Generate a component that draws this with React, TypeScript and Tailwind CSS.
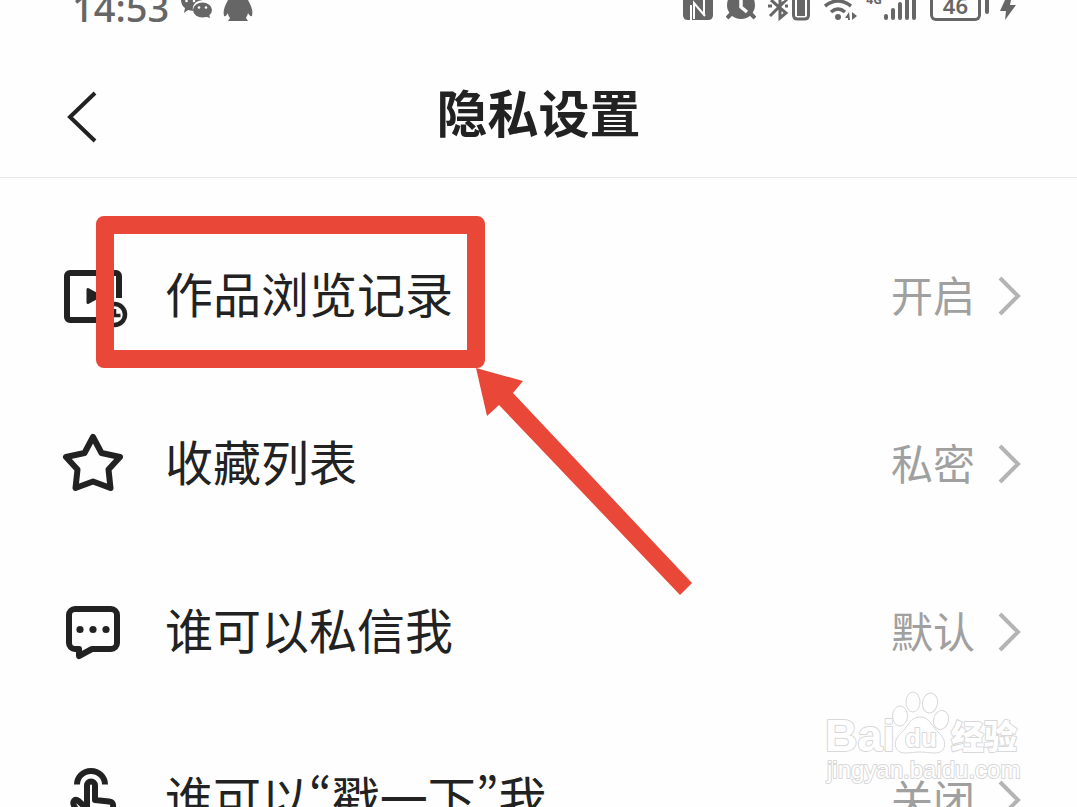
import type { ReactNode } from 'react'

type Setting = {
  label: string
  value: string
  icon: ReactNode
  highlighted?: boolean
}

const iconClass = 'h-16 w-16 shrink-0 overflow-visible'

function HistoryIcon() {
  return (
    <svg viewBox="0 0 64 64" className={iconClass} fill="none" stroke="currentColor" strokeWidth="6" aria-hidden="true">
      <path d="M55 34V12a3 3 0 0 0-3-3H6a3 3 0 0 0-3 3v41a3 3 0 0 0 3 3h34" />
      <path d="M24 25.500v13l12-6.500z" fill="currentColor" strokeWidth="3" strokeLinejoin="round" />
      <circle cx="50.500" cy="50.500" r="10.500" strokeWidth="4.500" />
      <path d="M50.500 45v6.500h6" strokeWidth="3.500" />
    </svg>
  )
}

function StarIcon() {
  return (
    <svg viewBox="0 0 64 64" className={iconClass} fill="none" stroke="currentColor" strokeWidth="6" strokeLinejoin="round" aria-hidden="true">
      <path d="M29 5l8.500 16 18.500 4-11.500 12.500 2 18.500L29 49.500 11.500 56l2-18.500L2 25l18.500-4z" />
    </svg>
  )
}

function MessageIcon() {
  return (
    <svg viewBox="0 0 64 64" className={iconClass} fill="none" stroke="currentColor" strokeWidth="6" strokeLinejoin="round" aria-hidden="true">
      <path d="M11 9h36a6 6 0 0 1 6 6v28a6 6 0 0 1-6 6H28l-13 7v-7h-4a6 6 0 0 1-6-6V15a6 6 0 0 1 6-6z" />
      <g fill="currentColor" stroke="none">
        <circle cx="16" cy="29.500" r="3.600" />
        <circle cx="29" cy="29.500" r="3.600" />
        <circle cx="42" cy="29.500" r="3.600" />
      </g>
    </svg>
  )
}

function PokeIcon() {
  return (
    <svg viewBox="0 0 64 64" className={iconClass} fill="none" stroke="currentColor" strokeWidth="6" strokeLinejoin="round" aria-hidden="true">
      <path d="M13 16.500a14 13.500 0 0 1 28 0" />
      <path d="M23 41l-9-8.500c-3-2.500-6 1-4 5L20 58h26l3-19c.5-4-.5-5-4-5.500L31 32V17.500a4 4 0 0 0-8 0V41" />
    </svg>
  )
}

const settings: Setting[] = [
  { label: '作品浏览记录', value: '开启', icon: <HistoryIcon />, highlighted: true },
  { label: '收藏列表', value: '私密', icon: <StarIcon /> },
  { label: '谁可以私信我', value: '默认', icon: <MessageIcon /> },
  { label: '谁可以“戳一下”我', value: '关闭', icon: <PokeIcon /> },
]

function StatusBar() {
  return (
    <div className="flex h-12 items-start justify-between overflow-hidden pr-[60px] pl-[72px] font-['Noto_Sans',sans-serif] text-[#666]">
      <div className="flex items-start gap-3">
        <span className="text-[38px] leading-[14px] font-medium">14:53</span>
        <svg viewBox="0 0 72 24" className="h-6 w-[72px]" fill="currentColor" aria-hidden="true">
          <path d="M0 0h22c-8 1-11 5-10 11l-5-1-4 3 1-5Q0 5 0 0z" />
          <ellipse cx="21.500" cy="10" rx="9.500" ry="7.500" />
          <path d="M23 16l5-2 1 4z" />
          <g fill="#fff">
            <circle cx="5.500" cy="1" r="1.300" />
            <circle cx="13" cy="1" r="1.300" />
            <circle cx="18" cy="7.500" r="1.300" />
            <circle cx="25" cy="7.500" r="1.300" />
          </g>
          <path d="M47 0h20l2 4c2 4 3 8 2 12-1 1-3-1-4-3-.5 3-2 4-2 5l2 3H47l2-3c-1-1-2-3-2-5-1 2-3 4-4 3-1-4 0-8 2-12z" />
        </svg>
      </div>
      <div className="flex items-start gap-3">
        <svg viewBox="0 0 32 24" className="h-6 w-8" aria-hidden="true">
          <path d="M1 0h30v15q0 5-5 5H6q-5 0-5-5z" fill="currentColor" />
          <path d="M9 20V5M22 0v14" fill="none" stroke="#fff" strokeWidth="2" />
          <path d="M12 19V3l11 13" fill="none" stroke="#fff" strokeWidth="2" />
        </svg>
        <svg viewBox="0 0 30 24" className="h-6 w-[30px]" aria-hidden="true">
          <circle cx="15" cy="5" r="14" fill="currentColor" />
          <path d="M5 14l-4 4M25 14l4 4" stroke="currentColor" strokeWidth="4" />
          <path d="M15 0v7l6 5" fill="none" stroke="#fff" strokeWidth="3.500" />
        </svg>
        <svg viewBox="0 0 44 24" className="h-6 w-11" fill="none" stroke="currentColor" strokeWidth="3" aria-hidden="true">
          <path d="M3 0l15 13-6 5V-5l6 5L2 16" />
          <path d="M0 6h4M17 6h3" />
          <path d="M25.500 0v15q0 4 4 4h7q4 0 4-4V0" />
          <path d="M29 0h8v16h-8z" fill="currentColor" stroke="none" />
        </svg>
        <div className="flex items-start gap-2">
          <svg viewBox="0 0 34 24" className="h-6 w-[34px]" fill="none" stroke="currentColor" strokeWidth="3.500" aria-hidden="true">
            <path d="M1 6q13-10 26 0M7 12q7-6 14 0" />
            <circle cx="14" cy="17" r="3" fill="currentColor" stroke="none" />
            <path d="M25 12l-4 6h3v2h2zM28 12v8l5-4z" fill="currentColor" stroke="none" />
          </svg>
          <div className="flex items-start">
            <span className="text-xs leading-[0px] font-bold">4G</span>
            <svg viewBox="0 0 36 24" className="h-6 w-9" stroke="currentColor" strokeWidth="4" strokeLinecap="round" aria-hidden="true">
              <path d="M4 16v2M11 10v8M18 4v14M25-2v20M32-2v20" />
            </svg>
          </div>
        </div>
        <div className="flex items-start gap-1">
          <span className="h-[21px] rounded-b-md border-3 border-t-0 border-current px-2.5 text-[22px] leading-[10px] font-semibold">46</span>
          <span className="h-3.5 w-1 rounded-b-sm bg-current" />
          <svg viewBox="0 0 24 24" className="h-6 w-6" fill="currentColor" aria-hidden="true">
            <path d="M12 0h6l-1 5h6L12 20l1-9H7z" />
          </svg>
        </div>
      </div>
    </div>
  )
}

function Header() {
  return (
    <header className="grid h-[130px] grid-cols-[1fr_auto_1fr] items-center border-b border-[#e8e8e8] px-16">
      <button type="button" aria-label="返回" className="justify-self-start">
        <svg viewBox="0 0 40 64" className="h-16 w-10" fill="none" stroke="currentColor" strokeWidth="4" aria-hidden="true">
          <path d="M31 12L6 36l25 24" />
        </svg>
      </button>
      <h1 className="pb-1 text-[51px] leading-14 font-bold">隐私设置</h1>
    </header>
  )
}

function SettingRow({ label, value, icon, highlighted }: Setting) {
  return (
    <li className="relative">
      <button type="button" className="flex h-[168px] w-full items-center pr-14 pl-16 text-left">
        {icon}
        <span className="ml-[37px] flex-1 pb-2 text-5xl leading-16">{label}</span>
        <span className="mr-[22px] pb-1 text-[42px] leading-16 text-[#a0a0a0]">{value}</span>
        <svg viewBox="0 0 24 48" className="h-12 w-6 shrink-0 text-[#b4b4b4]" fill="none" stroke="currentColor" strokeWidth="4" aria-hidden="true">
          <path d="M3 6l18 18L3 42" />
        </svg>
      </button>
      {highlighted && <Highlight />}
    </li>
  )
}

// red frame plus the arrow that points at its corner
function Highlight() {
  return (
    <div className="pointer-events-none absolute top-1 left-24 z-10 h-[152px] w-[389px] rounded-lg border-18 border-[#e94738]">
      <svg viewBox="0 0 220 230" className="absolute top-[133px] left-[360px] h-[230px] w-[220px]" fill="#e94738" aria-hidden="true">
        <path d="M2 1l47 13-10 12 179 190-12 12L25 38 13 49z" />
      </svg>
    </div>
  )
}

function Watermark() {
  return (
    <svg
      viewBox="0 0 200 100"
      className="pointer-events-none absolute right-14 bottom-4 h-[100px] w-[200px] overflow-visible font-['Liberation_Sans','Noto_Sans_CJK_SC',sans-serif]"
      fill="#fff"
      stroke="#d8d8d8"
      role="img"
      aria-label="Baidu经验"
    >
      <ellipse cx="79" cy="25" rx="7.500" ry="10" />
      <ellipse cx="92" cy="11" rx="7" ry="10" />
      <ellipse cx="109" cy="12" rx="7.500" ry="10" transform="rotate(12 109 12)" />
      <ellipse cx="120" cy="29" rx="7.500" ry="9.500" transform="rotate(15 120 29)" />
      <path d="M99 26c10 0 12 10 19 16 9 8 7 20-4 20-6 0-9-1-15-1s-9 1-15 1c-11 0-13-12-4-20 7-6 9-16 19-16z" />
      <g strokeWidth="2" strokeLinejoin="round" paintOrder="stroke">
        <text x="4" y="60" fontSize="45" fontWeight="700">Bai</text>
        <text x="84" y="56" fontSize="26" fontWeight="700">du</text>
        <text x="130" y="58" fontSize="33" fontWeight="900">经验</text>
        <text x="6" y="87" fontSize="24">jingyan.baidu.com</text>
      </g>
    </svg>
  )
}

export default function App() {
  return (
    <div
      lang="zh-CN"
      className="relative h-screen overflow-hidden bg-[#fefefe] font-['Noto_Sans_CJK_SC',sans-serif] text-[#222]"
    >
      <StatusBar />
      <Header />
      <main>
        <ul className="pt-[34px] [font-feature-settings:'pwid']">
          {settings.map((setting) => (
            <SettingRow key={setting.label} {...setting} />
          ))}
        </ul>
      </main>
      <Watermark />
    </div>
  )
}
